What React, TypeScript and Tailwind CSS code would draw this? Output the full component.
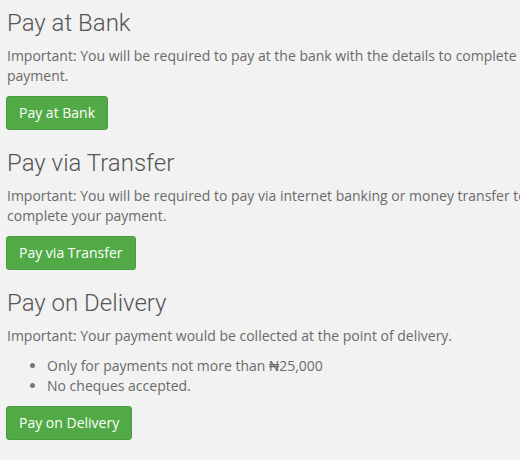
export default function App() {
  const sections = [
    {
      title: "Pay at Bank",
      text: "Important: You will be required to pay at the bank with the details to complete your payment.",
      button: "Pay at Bank",
    },
    {
      title: "Pay via Transfer",
      text: "Important: You will be required to pay via internet banking or money transfer to complete your payment.",
      button: "Pay via Transfer",
    },
    {
      title: "Pay on Delivery",
      text: "Important: Your payment would be collected at the point of delivery.",
      list: ["Only for payments not more than ₦25,000", "No cheques accepted."],
      button: "Pay on Delivery",
    },
  ];

  return (
    <div className="h-[460px] w-[520px] overflow-hidden bg-[#f2f2f2]">
      <div className="w-[560px] pl-[7px] pt-[10px] font-['Open_Sans',sans-serif] text-[14px] leading-[20px] text-[#6a6a6a]">
        {sections.map((s) => (
          <section key={s.title} className="mb-[20px]">
            <h3 className="mb-[10px] font-['Roboto',sans-serif] text-[24px] font-light leading-[26px] text-[#555]">
              {s.title}
            </h3>
            <p className="mb-[10px]">{s.text}</p>
            {s.list && (
              <ul className="mb-[10px] list-disc pl-[40px] marker:text-[#777]">
                {s.list.map((li) => (
                  <li key={li}>{li}</li>
                ))}
              </ul>
            )}
            <button className="-ml-px rounded-[3px] border border-[#4a9d3f] bg-[#52aa46] px-[12px] py-[6px] text-[14px] leading-[20px] text-white">
              {s.button}
            </button>
          </section>
        ))}
      </div>
    </div>
  );
}
